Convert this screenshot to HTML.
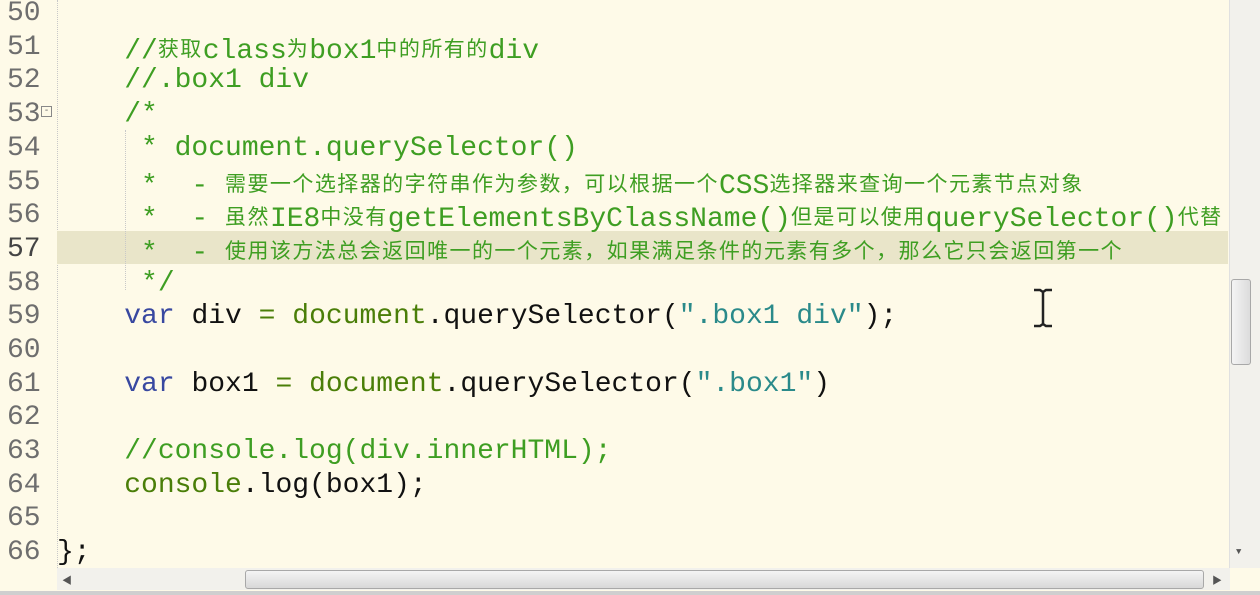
<!DOCTYPE html>
<html><head><meta charset="utf-8"><style>
body{margin:0;width:1260px;height:595px;overflow:hidden;background:#fefae8;position:relative;font-family:"Liberation Mono","Noto Sans CJK SC",monospace;}
.ln{position:absolute;left:7px;top:2px;font-size:28px;color:#6e6e6e;line-height:34px;}
.code{position:absolute;left:57px;top:2px;font-size:28px;line-height:34px;white-space:pre;color:#111;}
.l{position:absolute;left:0;height:34px;}
.c{color:#3e9e22}
.k{color:#3848a0}
.g{color:#4a7e08}
.s{color:#2a8a8a}
.z{font-family:"Noto Sans CJK SC",sans-serif;font-size:21px;letter-spacing:1.45px;vertical-align:2px;}
.hl{position:absolute;left:57px;top:231px;width:1171px;height:33px;background:#e9e5c9;}
.vs{position:absolute;right:0;top:0;width:30px;height:568px;background:#f2f1ec;border-left:1px solid #e0e0e0;}
.thumb{position:absolute;left:1231px;top:279px;width:18px;height:84px;border:1px solid #a8a8a8;border-radius:3px;background:linear-gradient(90deg,#f4f4f4,#dcdcdc);}
.hs{position:absolute;left:57px;top:568px;width:1173px;height:22px;background:#f2f1ec;}
.hthumb{position:absolute;left:245px;top:570px;width:957px;height:17px;border:1px solid #a8a8a8;border-radius:3px;background:linear-gradient(#f4f4f4,#d8d8d8);}
</style></head><body>
<div style="position:absolute;left:57px;top:0;height:568px;border-left:1px dotted #c8c8c8"></div>
<div class="hl"></div>
<div style="position:absolute;left:125px;top:130px;height:160px;border-left:1px dotted #c8c8c8"></div>
<div style="position:absolute;left:41px;top:106px;width:9px;height:9px;border:1px solid #888;font-size:10px;line-height:8px;text-align:center;color:#666;font-family:'Liberation Sans',sans-serif">-</div>
<div class="ln">
<div class="l" style="top:-5px">50</div>
<div class="l" style="top:29px">51</div>
<div class="l" style="top:62px">52</div>
<div class="l" style="top:96px">53</div>
<div class="l" style="top:130px">54</div>
<div class="l" style="top:164px">55</div>
<div class="l" style="top:197px">56</div>
<div class="l" style="top:231px;color:#444">57</div>
<div class="l" style="top:265px">58</div>
<div class="l" style="top:298px">59</div>
<div class="l" style="top:332px">60</div>
<div class="l" style="top:366px">61</div>
<div class="l" style="top:399px">62</div>
<div class="l" style="top:433px">63</div>
<div class="l" style="top:467px">64</div>
<div class="l" style="top:500px">65</div>
<div class="l" style="top:534px">66</div>
</div>
<div class="code">
<div class="l c" style="top:29px">    //<span class="z">获取</span>class<span class="z">为</span>box1<span class="z">中的所有的</span>div</div>
<div class="l c" style="top:62px">    //.box1 div</div>
<div class="l c" style="top:96px">    /*</div>
<div class="l c" style="top:130px">     * document.querySelector()</div>
<div class="l c" style="top:164px">     *  - <span class="z">需要一个选择器的字符串作为参数，可以根据一个</span>CSS<span class="z">选择器来查询一个元素节点对象</span></div>
<div class="l c" style="top:197px">     *  - <span class="z">虽然</span>IE8<span class="z">中没有</span>getElementsByClassName()<span class="z">但是可以使用</span>querySelector()<span class="z">代替</span></div>
<div class="l c" style="top:231px">     *  - <span class="z">使用该方法总会返回唯一的一个元素，如果满足条件的元素有多个，那么它只会返回第一个</span></div>
<div class="l c" style="top:265px">     */</div>
<div class="l" style="top:298px">    <span class="k">var</span> div <span class="g">=</span> <span class="g">document</span>.querySelector(<span class="s">".box1 div"</span>);</div>
<div class="l" style="top:366px">    <span class="k">var</span> box1 <span class="g">=</span> <span class="g">document</span>.querySelector(<span class="s">".box1"</span>)</div>
<div class="l c" style="top:433px">    //console.log(div.innerHTML);</div>
<div class="l" style="top:467px">    <span class="g">console</span>.log(box1);</div>
<div class="l" style="top:534px">};</div>
</div>
<svg style="position:absolute;left:1032px;top:288px" width="22" height="40" viewBox="0 0 22 40"><path d="M2 2h6l3 2 3-2h6M11 4v32M2 38h6l3-2 3 2h6" stroke="#222" stroke-width="2.5" fill="none"/></svg>
<div class="vs"></div>
<div class="thumb"></div>
<div style="position:absolute;left:1236px;top:547px;font-size:9px;color:#555">▼</div>
<div class="hs"></div>
<div class="hthumb"></div>
<div style="position:absolute;left:62px;top:572px;font-size:10px;color:#555">◀</div>
<div style="position:absolute;left:1212px;top:572px;font-size:10px;color:#555">▶</div>
<div style="position:absolute;left:0;top:591px;width:1260px;height:4px;background:#cfcfcf"></div>
</body></html>
